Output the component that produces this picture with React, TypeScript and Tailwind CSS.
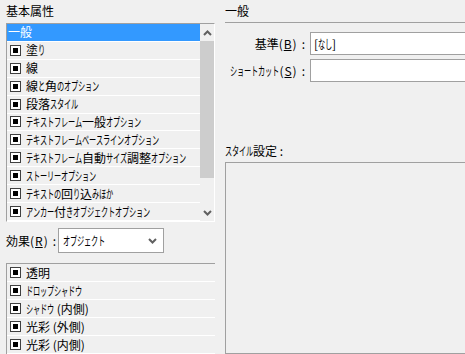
import React from "react"

const font = { fontFamily: '"Noto Sans CJK JP", "MS UI Gothic", sans-serif' }

const props = [
  "塗り",
  "線",
  "線と角のオプション",
  "段落スタイル",
  "テキストフレーム一般オプション",
  "テキストフレームベースラインオプション",
  "テキストフレーム自動サイズ調整オプション",
  "ストーリーオプション",
  "テキストの回り込みほか",
  "アンカー付きオブジェクトオプション",
]

const effects = ["透明", "ドロップシャドウ", "シャドウ (内側)", "光彩 (外側)", "光彩 (内側)"]

// kana in the old UI font are narrow, squeeze them
function J({ t }: { t: string }) {
  return (
    <>
      {Array.from(t).map((c, i) =>
        /[\u3040-\u30ff]/.test(c) ? (
          <span key={i} className="inline-block w-[7px]">
            <span className="inline-block scale-x-[0.6] origin-left">{c}</span>
          </span>
        ) : (
          <span key={i}>{c}</span>
        )
      )}
    </>
  )
}

function Key({ k }: { k: string }) {
  return (
    <>
      (<span className="underline px-[1px]">{k}</span>)<span className="ml-[5px]">:</span>
    </>
  )
}

function Check() {
  return (
    <span className="w-[11px] h-[11px] shrink-0 border border-[#404040] bg-white flex items-center justify-center">
      <span className="w-[5px] h-[5px] bg-black" />
    </span>
  )
}

function Chevron({ up }: { up?: boolean }) {
  return (
    <svg width="9" height="6" viewBox="0 0 9 6">
      <polyline
        points={up ? "1,5 4.5,1.5 8,5" : "1,1 4.5,4.5 8,1"}
        fill="none"
        stroke="#606060"
        strokeWidth="2"
      />
    </svg>
  )
}

function Row({ label }: { label: string }) {
  return (
    <div className="h-[18px] border-b border-white flex items-center gap-[5px] pl-[3px] text-[12px] leading-none whitespace-nowrap overflow-hidden">
      <Check />
      <span className="whitespace-nowrap">
        <J t={label} />
      </span>
    </div>
  )
}

export default function App() {
  return (
    <div
      className="w-[465px] h-[354px] bg-[#f0f0f0] text-black flex overflow-hidden"
      style={font}
    >
      {/* left column */}
      <div className="w-[209px] ml-[6px] flex flex-col shrink-0">
        <div className="h-[23px] pt-[4px] text-[12px] leading-[14px]">基本属性</div>
        <div className="h-[199px] border-t border-l border-[#a0a0a0] border-b-white border-r-white border-b border-r flex">
          <div className="flex-1 flex flex-col overflow-hidden">
            <div className="h-[18px] bg-[#3399ff] text-white border-b border-white flex items-center pl-[1px] text-[12px] leading-none">
              一般
            </div>
            {props.map((p) => (
              <Row key={p} label={p} />
            ))}
          </div>
          <div className="w-[14px] flex flex-col items-center">
            <div className="h-[17px] flex items-center justify-center">
              <Chevron up />
            </div>
            <div className="w-full h-[137px] bg-[#cdcdcd]" />
            <div className="flex-1 flex items-end justify-center pb-[5px]">
              <Chevron />
            </div>
          </div>
        </div>

        <div className="flex items-center mt-[6px] h-[25px] text-[12px] whitespace-nowrap">
          <span className="w-[52px]">
            効果<Key k="R" />
          </span>
          <div className="w-[106px] h-[25px] bg-white border border-[#a0a0a0] flex items-center justify-between pl-[4px] pr-[6px]">
            <span>
              <J t="オブジェクト" />
            </span>
            <Chevron />
          </div>
        </div>

        <div className="mt-[10px] flex-1 border-t border-l border-[#a0a0a0] flex flex-col">
          {effects.map((e) => (
            <Row key={e} label={e} />
          ))}
        </div>
      </div>

      {/* right column */}
      <div className="ml-[10px] w-[300px] shrink-0 flex flex-col text-[12px]">
        <div className="h-[23px] pt-[4px] leading-[14px] border-b border-[#a0a0a0]">一般</div>
        <div className="mt-[9px] flex flex-col gap-[4px]">
          <div className="flex items-center gap-[5px]">
            <span className="w-[80px] text-right whitespace-nowrap">
              基準<Key k="B" />
            </span>
            <div className="flex-1 h-[23px] bg-white border border-[#a0a0a0] flex items-center pl-[3px]">
              [<J t="なし" />]
            </div>
          </div>
          <div className="flex items-center gap-[5px]">
            <span className="w-[80px] text-right whitespace-nowrap">
              <J t="ショートカット" />
              <Key k="S" />
            </span>
            <div className="flex-1 h-[23px] bg-white border border-[#a0a0a0]" />
          </div>
        </div>
        <div className="mt-[61px] h-[19px] pt-[1px] leading-[14px] whitespace-nowrap">
          <J t="スタイル" />設定 :
        </div>
        <div className="flex-1 border border-[#a0a0a0] bg-[#f0f0f0]" />
      </div>
    </div>
  )
}
